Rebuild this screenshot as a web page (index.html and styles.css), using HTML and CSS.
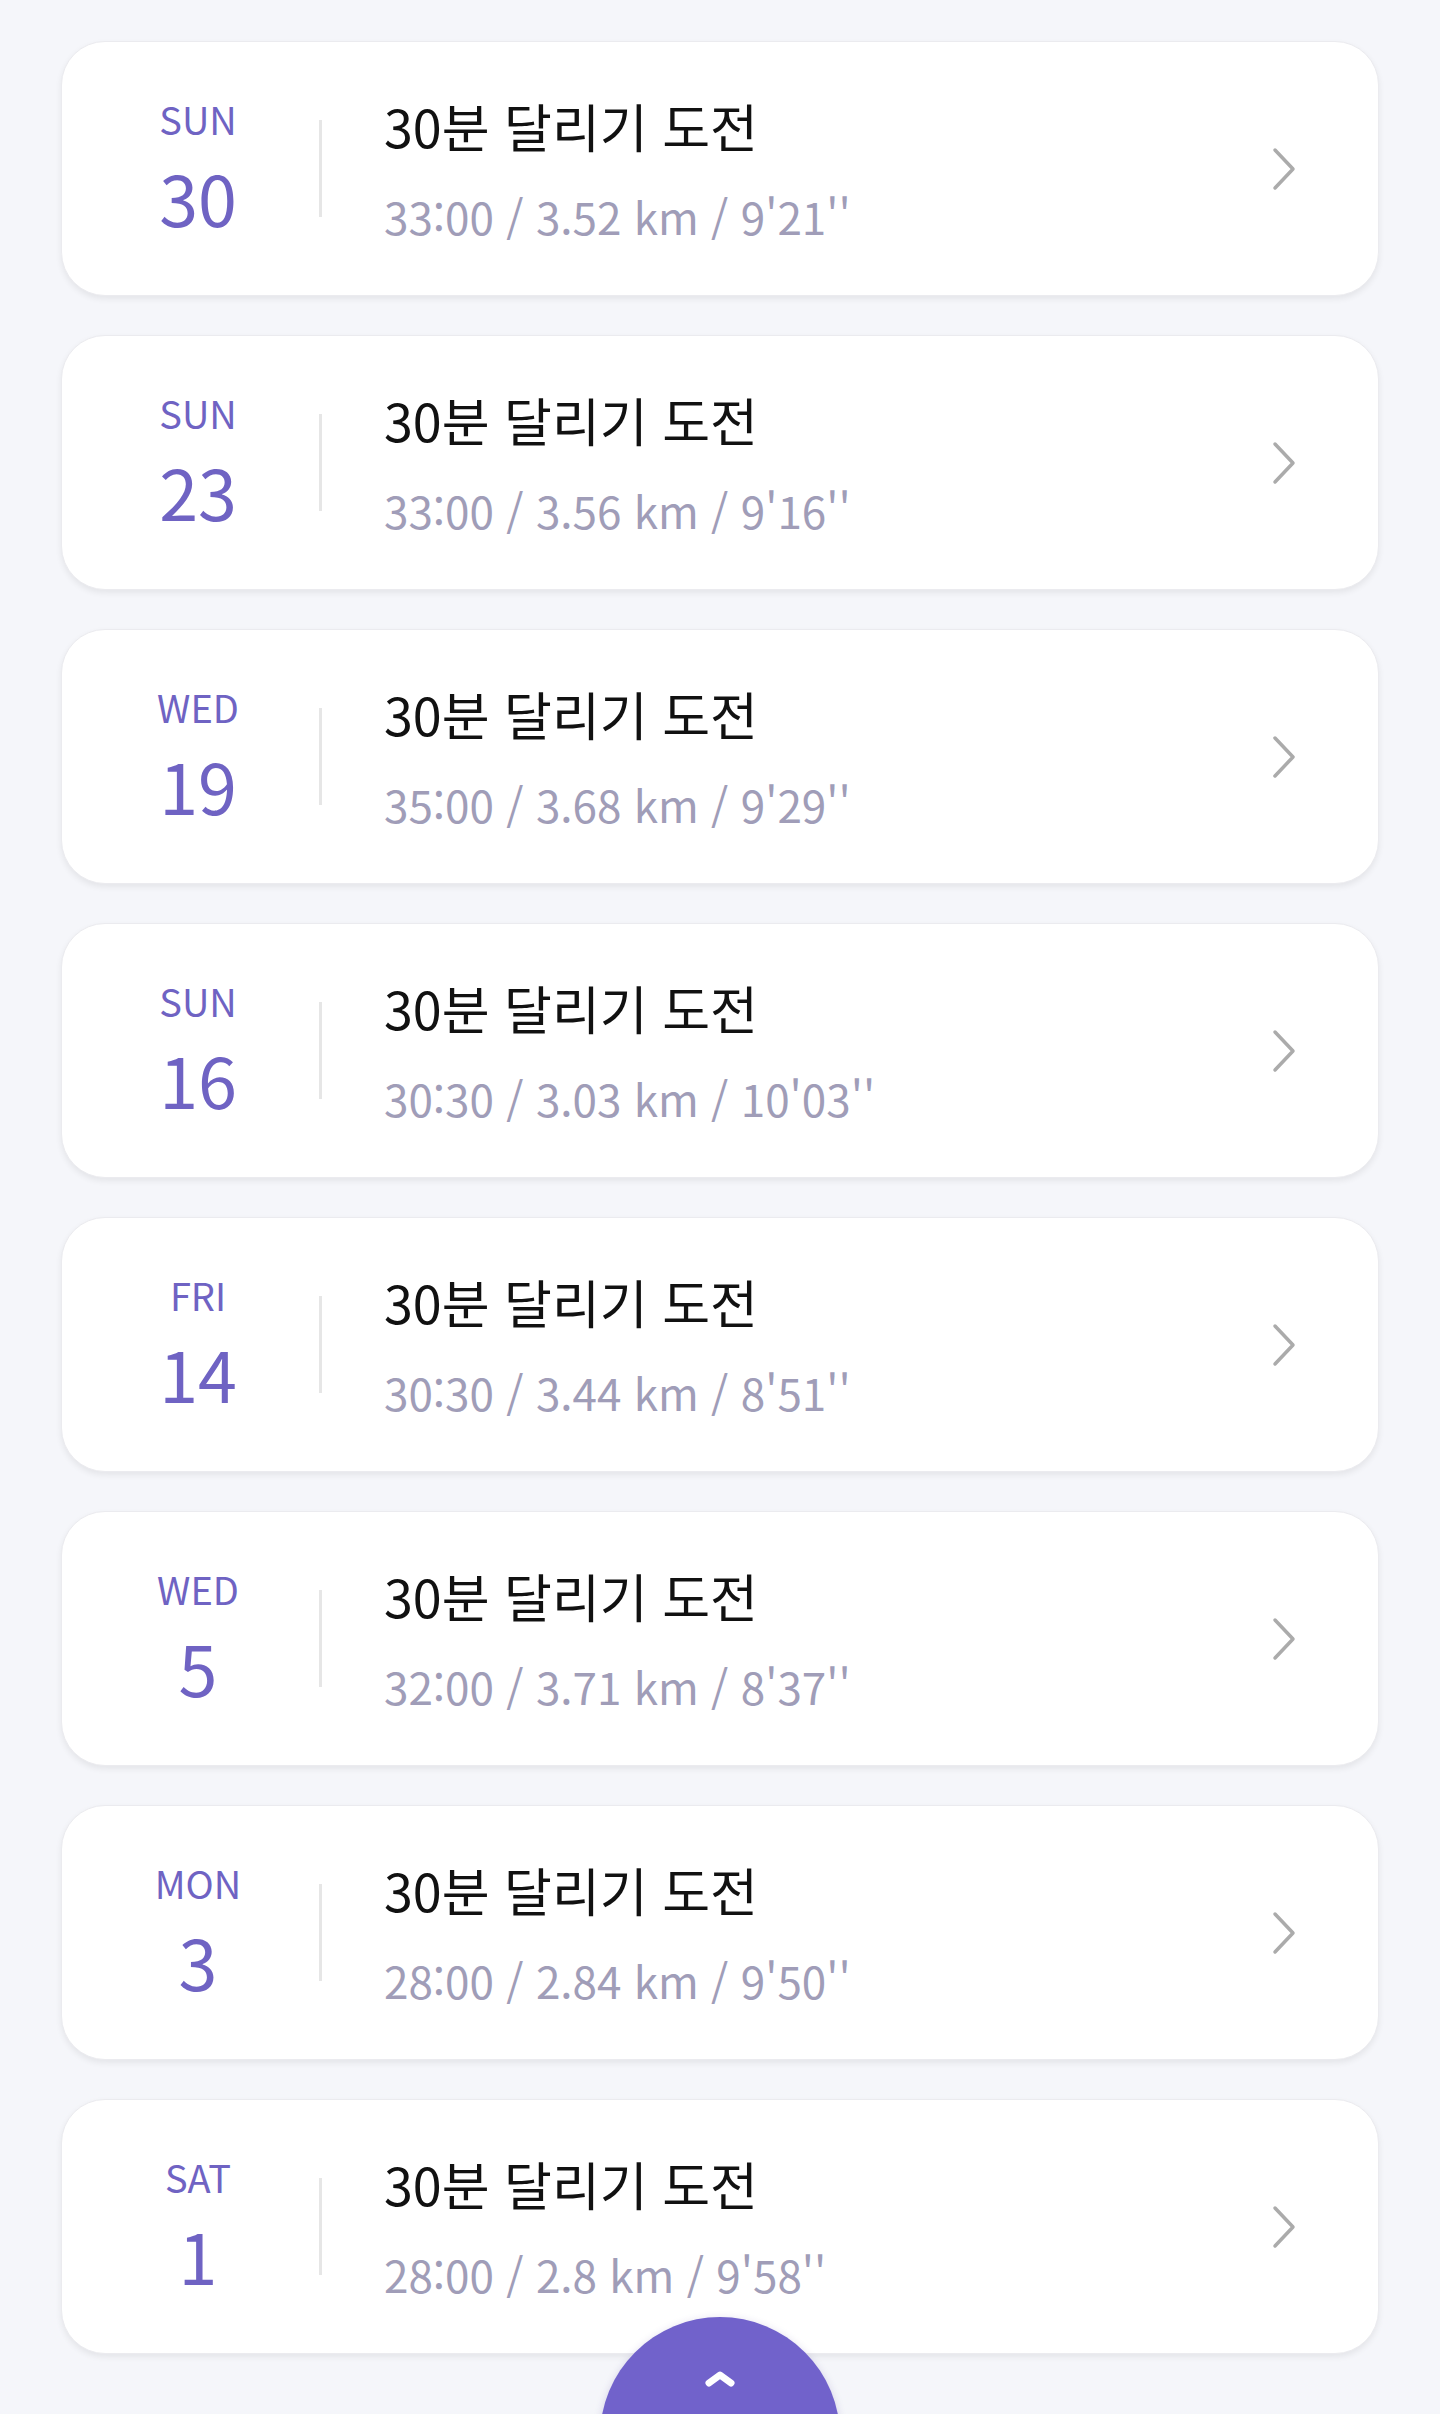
FILE: index.html
```html
<!DOCTYPE html>
<html lang="ko">
<head>
  <meta charset="UTF-8">
  <meta name="viewport" content="width=device-width, initial-scale=1.0">
  <title>Running Log</title>
  <link rel="stylesheet" href="styles.css">
</head>
<body>
  <ul class="run-list">
    <li class="run-card">
      <div class="run-date"><span class="run-day">SUN</span><span class="run-num">30</span></div>
      <div class="run-divider"></div>
      <div class="run-info">
        <div class="run-title">30분 달리기 도전</div>
        <div class="run-stats">33:00 / 3.52 km / 9'21''</div>
      </div>
      <svg class="run-arrow" viewBox="0 0 24 44" width="24" height="44"><polyline points="3,3 21,22 3,41"/></svg>
    </li>
    <li class="run-card">
      <div class="run-date"><span class="run-day">SUN</span><span class="run-num">23</span></div>
      <div class="run-divider"></div>
      <div class="run-info">
        <div class="run-title">30분 달리기 도전</div>
        <div class="run-stats">33:00 / 3.56 km / 9'16''</div>
      </div>
      <svg class="run-arrow" viewBox="0 0 24 44" width="24" height="44"><polyline points="3,3 21,22 3,41"/></svg>
    </li>
    <li class="run-card">
      <div class="run-date"><span class="run-day">WED</span><span class="run-num">19</span></div>
      <div class="run-divider"></div>
      <div class="run-info">
        <div class="run-title">30분 달리기 도전</div>
        <div class="run-stats">35:00 / 3.68 km / 9'29''</div>
      </div>
      <svg class="run-arrow" viewBox="0 0 24 44" width="24" height="44"><polyline points="3,3 21,22 3,41"/></svg>
    </li>
    <li class="run-card">
      <div class="run-date"><span class="run-day">SUN</span><span class="run-num">16</span></div>
      <div class="run-divider"></div>
      <div class="run-info">
        <div class="run-title">30분 달리기 도전</div>
        <div class="run-stats">30:30 / 3.03 km / 10'03''</div>
      </div>
      <svg class="run-arrow" viewBox="0 0 24 44" width="24" height="44"><polyline points="3,3 21,22 3,41"/></svg>
    </li>
    <li class="run-card">
      <div class="run-date"><span class="run-day">FRI</span><span class="run-num">14</span></div>
      <div class="run-divider"></div>
      <div class="run-info">
        <div class="run-title">30분 달리기 도전</div>
        <div class="run-stats">30:30 / 3.44 km / 8'51''</div>
      </div>
      <svg class="run-arrow" viewBox="0 0 24 44" width="24" height="44"><polyline points="3,3 21,22 3,41"/></svg>
    </li>
    <li class="run-card">
      <div class="run-date"><span class="run-day">WED</span><span class="run-num">5</span></div>
      <div class="run-divider"></div>
      <div class="run-info">
        <div class="run-title">30분 달리기 도전</div>
        <div class="run-stats">32:00 / 3.71 km / 8'37''</div>
      </div>
      <svg class="run-arrow" viewBox="0 0 24 44" width="24" height="44"><polyline points="3,3 21,22 3,41"/></svg>
    </li>
    <li class="run-card">
      <div class="run-date"><span class="run-day">MON</span><span class="run-num">3</span></div>
      <div class="run-divider"></div>
      <div class="run-info">
        <div class="run-title">30분 달리기 도전</div>
        <div class="run-stats">28:00 / 2.84 km / 9'50''</div>
      </div>
      <svg class="run-arrow" viewBox="0 0 24 44" width="24" height="44"><polyline points="3,3 21,22 3,41"/></svg>
    </li>
    <li class="run-card">
      <div class="run-date"><span class="run-day">SAT</span><span class="run-num">1</span></div>
      <div class="run-divider"></div>
      <div class="run-info">
        <div class="run-title">30분 달리기 도전</div>
        <div class="run-stats">28:00 / 2.8 km / 9'58''</div>
      </div>
      <svg class="run-arrow" viewBox="0 0 24 44" width="24" height="44"><polyline points="3,3 21,22 3,41"/></svg>
    </li>
  </ul>

  <button class="top-button" aria-label="Scroll to top">
    <svg viewBox="0 0 34 20" width="34" height="20"><polyline points="6,14 17,6 28,14"/></svg>
  </button>
</body>
</html>
```

FILE: styles.css
```css
body {
  margin: 0;
  background: #f5f6fa;
  font-family: "Noto Sans CJK KR", "Noto Sans", sans-serif;
}
.run-list {
  list-style: none;
  margin: 0;
  padding: 41px 61px 60px;
  display: flex;
  flex-direction: column;
  gap: 39px;
}
.run-card {
  display: flex;
  align-items: center;
  height: 255px;
  box-sizing: border-box;
  padding: 0 82px 0 66px;
  background: #ffffff;
  border: 1px solid #ebebef;
  border-radius: 44px;
  box-shadow: 0 3px 6px rgba(0, 0, 0, 0.07);
}
.run-date {
  width: 140px;
  display: flex;
  flex-direction: column;
  align-items: center;
  gap: 24px;
  margin-bottom: 6px;
  color: #6f63c3;
}
.run-day {
  font-size: 38px;
  line-height: 1;
}
.run-num {
  font-size: 70px;
  line-height: 1;
}
.run-divider {
  width: 3px;
  height: 97px;
  margin-left: 51px;
  background: #e6e6e6;
}
.run-info {
  margin-left: 62px;
  display: flex;
  flex-direction: column;
  gap: 42px;
}
.run-title {
  font-size: 52px;
  line-height: 1;
  color: #111111;
}
.run-stats {
  font-size: 44px;
  line-height: 1;
  color: #a09db8;
}
.run-arrow {
  margin-left: auto;
  fill: none;
  stroke: #ababab;
  stroke-width: 3.5;
  stroke-linecap: round;
  stroke-linejoin: round;
}
.top-button {
  position: fixed;
  left: 50%;
  bottom: -143px;
  transform: translateX(-50%);
  width: 240px;
  height: 240px;
  padding: 52px 0 0;
  display: flex;
  justify-content: center;
  align-items: flex-start;
  border: none;
  border-radius: 50%;
  background: #7162cb;
  box-shadow: 0 2px 8px rgba(60, 40, 140, 0.18);
}
.top-button svg {
  fill: none;
  stroke: #ffffff;
  stroke-width: 7;
  stroke-linecap: round;
  stroke-linejoin: round;
}
```
